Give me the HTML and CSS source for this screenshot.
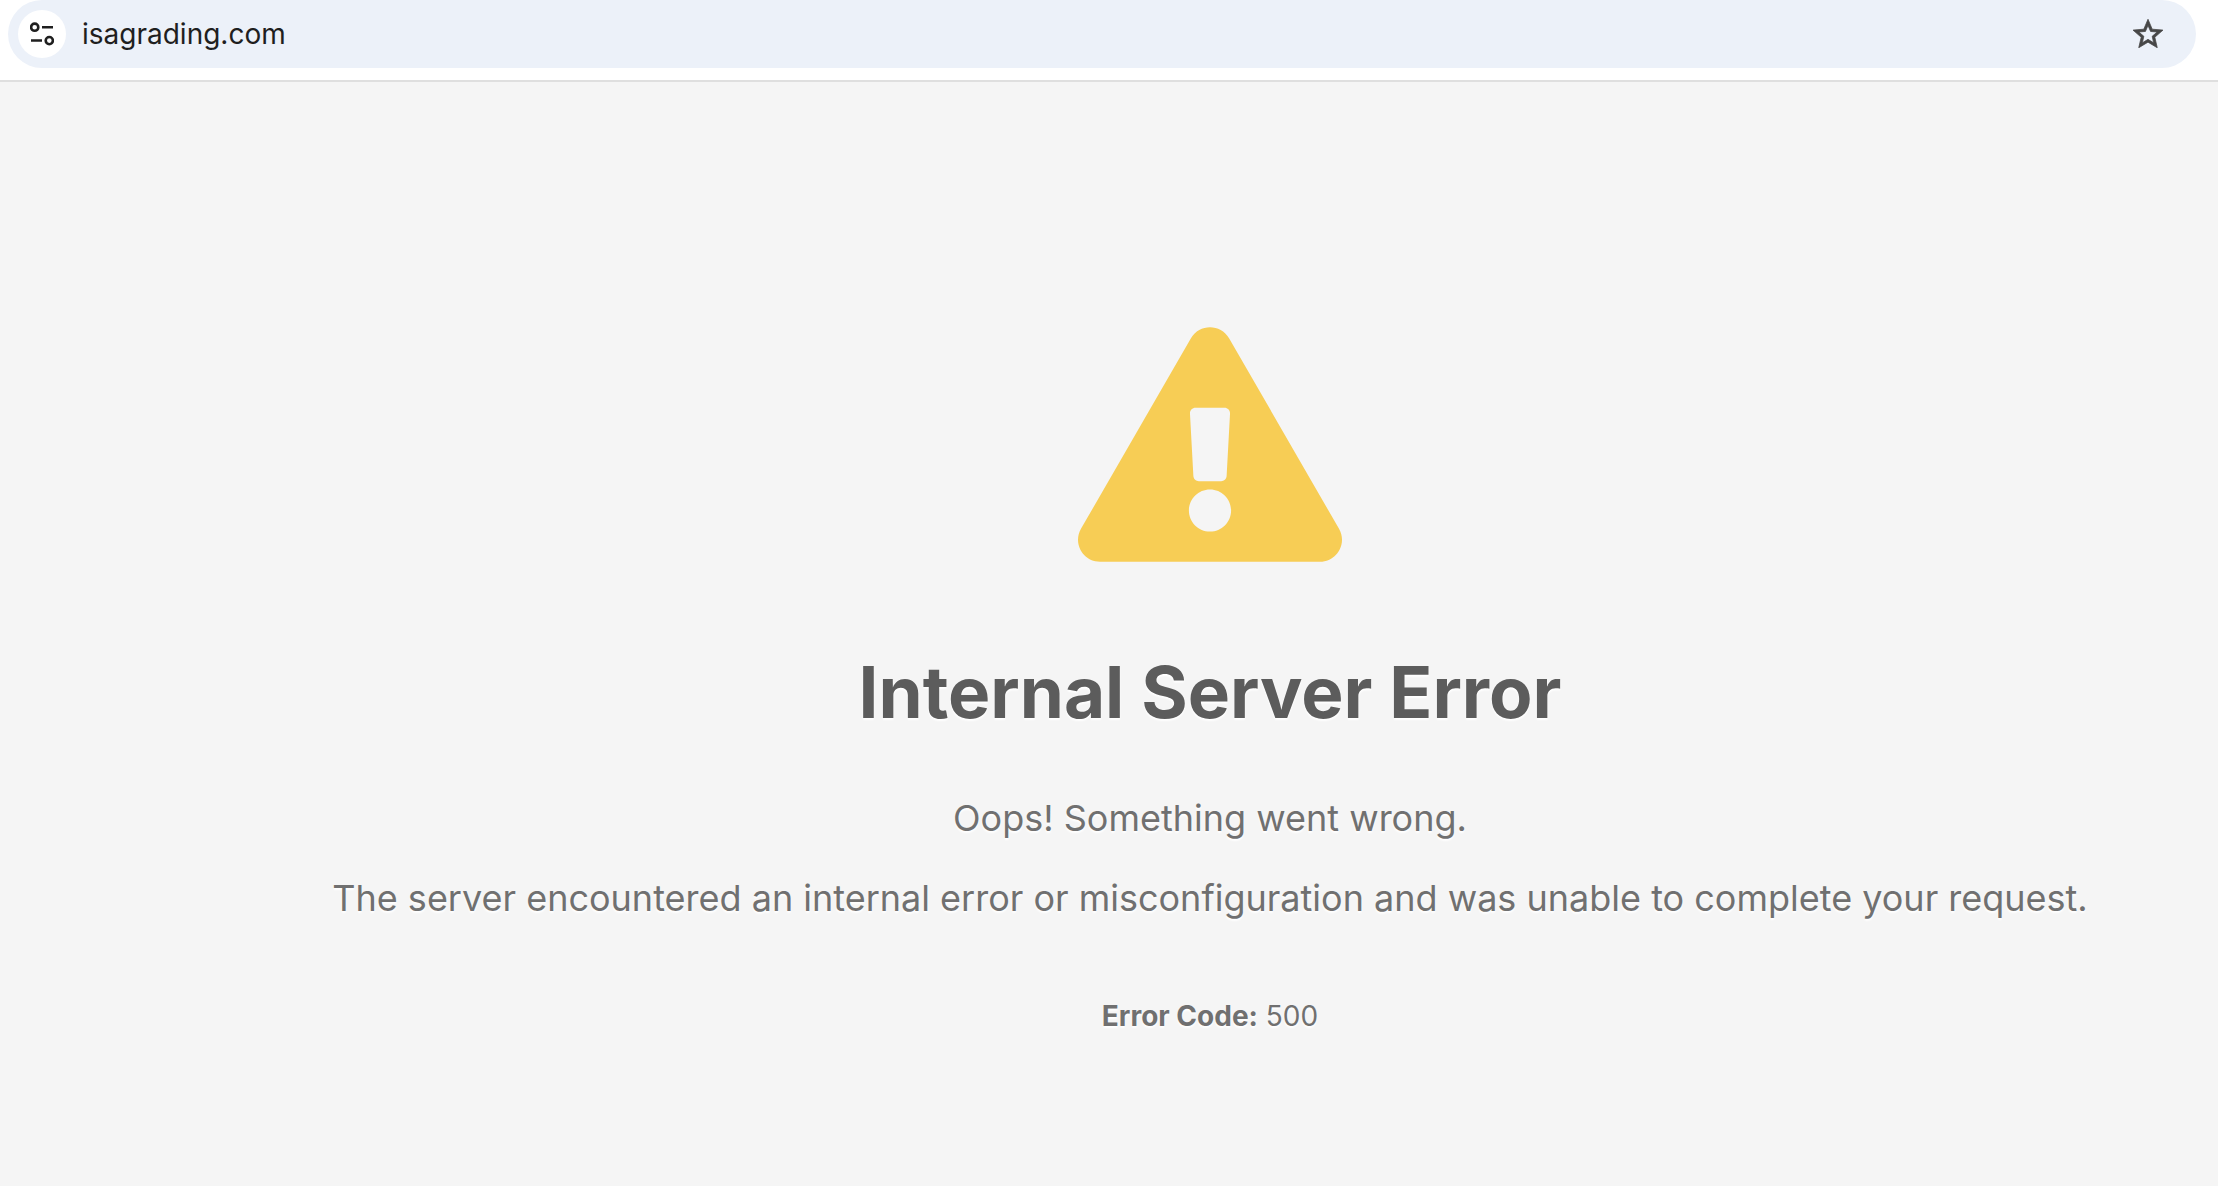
FILE: index.html
```
<!DOCTYPE html>
<html lang="en">
<head>
    <meta charset="UTF-8">
    <meta name="viewport" content="width=device-width, initial-scale=1.0">
    <title>Internal Server Error</title>
    <link rel="stylesheet" href="styles.css">
</head>
<body>
    <header class="toolbar">
        <form class="address-bar">
            <button class="site-info" type="button" aria-label="View site information">
                <svg viewBox="0 0 24 24" width="24" height="24" fill="none" stroke="currentColor" stroke-width="2.6">
                    <circle cx="4.7" cy="5.2" r="3.6"/>
                    <path d="M12 5.3h11M1 18.5h11"/>
                    <circle cx="19.3" cy="18.6" r="3.6"/>
                </svg>
            </button>
            <input class="address" type="text" value="isagrading.com" aria-label="Address">
            <button class="bookmark" type="button" aria-label="Bookmark this page">
                <svg viewBox="2 2 20 19" width="30" height="29" fill="currentColor" stroke="currentColor" stroke-width="0.5">
                    <path d="M22 9.24l-7.19-.62L12 2 9.19 8.63 2 9.24l5.46 4.73L5.82 21 12 17.27 18.18 21l-1.63-7.03L22 9.24zM12 15.4l-3.76 2.27 1-4.28-3.32-2.88 4.38-.38L12 6.1l1.71 4.04 4.38.38-3.32 2.88 1 4.28L12 15.4z"/>
                </svg>
            </button>
        </form>
    </header>

    <main class="error-page">
        <svg class="warning-icon" viewBox="0 0 576 512" aria-hidden="true">
            <path d="M569.517 440.013C587.975 472.007 564.806 512 527.94 512H48.054c-36.937 0-59.999-40.055-41.577-71.987L246.423 23.985c18.467-32.009 64.72-31.951 83.154 0l239.94 416.028zM288 354c-25.405 0-46 20.595-46 46s20.595 46 46 46 46-20.595 46-46-20.595-46-46-46zm-43.673-165.346l7.418 136c.347 6.364 5.609 11.346 11.982 11.346h48.546c6.373 0 11.635-4.982 11.982-11.346l7.418-136c.375-6.874-5.098-12.654-11.982-12.654h-63.383c-6.884 0-12.356 5.78-11.981 12.654z"/>
        </svg>
        <h1 class="error-title">Internal Server Error</h1>
        <p class="error-text">Oops! Something went wrong.</p>
        <p class="error-text">The server encountered an internal error or misconfiguration and was unable to complete your request.</p>
        <p class="error-code"><strong>Error Code:</strong> 500</p>
    </main>
</body>
</html>
```
FILE: styles.css
```
:root {
    --background: #f5f5f5;
    --title-color: #5c5c5c;
    --text-color: #707070;
    --warning-color: #f7cd55;
}

* {
    margin: 0;
    padding: 0;
    box-sizing: border-box;
}

body {
    min-height: 100vh;
    display: flex;
    flex-direction: column;
    background: var(--background);
    color: var(--text-color);
    font-family: Inter, "Liberation Sans", sans-serif;
}

/* Browser toolbar */
.toolbar {
    padding: 0 22px 12px 8px;
    background: #fff;
    border-bottom: 2px solid #dfdfdf;
}

.address-bar {
    display: flex;
    align-items: center;
    height: 68px;
    padding: 0 33px 0 10px;
    border-radius: 34px;
    background: #ecf1f9;
}

.site-info,
.bookmark {
    display: flex;
    align-items: center;
    justify-content: center;
    border: none;
    background: none;
    cursor: pointer;
}

.site-info {
    width: 48px;
    height: 48px;
    border-radius: 50%;
    background: #fff;
    color: #1f1f1f;
}

.bookmark {
    padding-bottom: 2px;
    color: #474747;
}

.address {
    flex: 1;
    min-width: 0;
    margin: 0 16px;
    border: none;
    outline: none;
    background: none;
    color: #1f1f1f;
    font: 400 28px Inter, "Liberation Sans", sans-serif;
}

/* Error message */
.error-page {
    flex: 1;
    display: flex;
    flex-direction: column;
    align-items: center;
    padding: 245px 0 0 202px;
    text-align: center;
    text-shadow: 0 2px 2px #fff;
}

.warning-icon {
    width: 264px;
    height: 235px;
    margin-bottom: 80px;
    fill: var(--warning-color);
}

.error-title {
    margin-bottom: 36px;
    color: var(--title-color);
    font-size: 71px;
    font-weight: 700;
    line-height: 100px;
}

.error-text {
    font-size: 36px;
    line-height: 80px;
}

.error-code {
    margin-top: 50px;
    font-size: 28px;
    line-height: 56px;
}
```
